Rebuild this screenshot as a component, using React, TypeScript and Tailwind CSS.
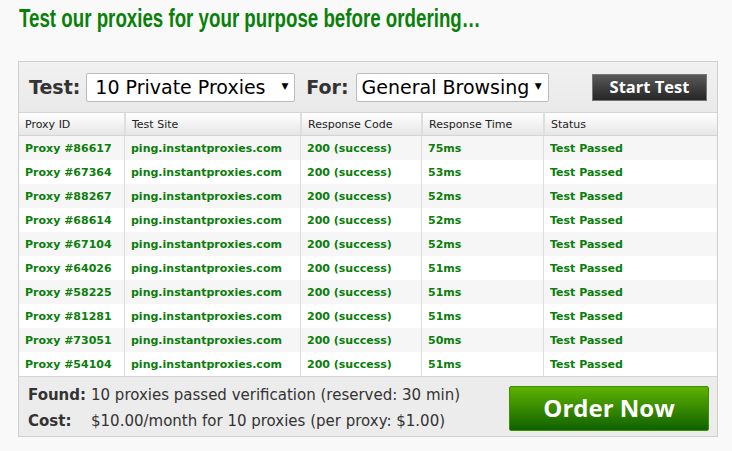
import React from "react";

const rows = [
  ["86617", "75ms"],
  ["67364", "53ms"],
  ["88267", "52ms"],
  ["68614", "52ms"],
  ["67104", "52ms"],
  ["64026", "51ms"],
  ["58225", "51ms"],
  ["81281", "51ms"],
  ["73051", "50ms"],
  ["54104", "51ms"],
];

const cols = "grid grid-cols-[105px_176px_121px_122px_1fr]";

export default function App() {
  return (
    <div className="w-[732px] h-[451px] bg-[#f9f9f9] overflow-hidden font-['DejaVu_Sans',Verdana,sans-serif]">
      <div className="h-[61px] pl-[19px] pt-[1px]">
        <h1 className="origin-left scale-x-[0.72] whitespace-nowrap text-[26px] leading-[34px] font-bold text-[#0a800a] font-['Liberation_Sans',Arial,sans-serif]">
          Test our proxies for your purpose before ordering…
        </h1>
      </div>
      <div className="ml-[18px] w-[700px] border border-[#cfcfcf] bg-[#eeeeee]">
        <div className="h-[50px] flex items-center pl-[10px] pr-[10px] bg-gradient-to-b from-[#f1f1f1] to-[#e9e9e9]">
          <span className="text-[19px] font-bold text-[#333] mr-[6px]">Test:</span>
          <div className="w-[209px] h-[29px] bg-white border border-[#bbb] rounded-[2px] flex items-center pl-[8px] pr-[6px] text-[19px] text-black">
            <span className="flex-1 whitespace-nowrap">10 Private Proxies</span>
            <span className="text-[9px]">▼</span>
          </div>
          <span className="text-[19px] font-bold text-[#333] ml-[11px] mr-[7px]">For:</span>
          <div className="w-[193px] h-[29px] bg-white border border-[#bbb] rounded-[2px] flex items-center pl-[5px] pr-[6px] text-[19px] text-black">
            <span className="flex-1 whitespace-nowrap">General Browsing</span>
            <span className="text-[9px]">▼</span>
          </div>
          <div className="ml-auto w-[115px] h-[27px] border border-[#777] bg-gradient-to-b from-[#5a5a5a] to-[#262626] flex items-center justify-center text-white font-bold text-[16.5px] font-['Open_Sans',sans-serif]">
            Start Test
          </div>
        </div>
        <div className={`${cols} h-[24px] border-t border-b border-[#d4d4d4] bg-gradient-to-b from-[#ffffff] to-[#e6e6e6] text-[11px] text-[#222]`}>
          {["Proxy ID", "Test Site", "Response Code", "Response Time", "Status"].map((h, i) => (
            <div key={h} className={`pl-[6px] pt-[3px] flex items-center ${i > 0 ? "border-l-2 border-[#dedede]" : ""}`}>{h}</div>
          ))}
        </div>
        {rows.map(([id, t], r) => (
          <div key={id} className={`${cols} h-[24px] text-[11px] font-bold text-[#0b7d0b] ${r % 2 === 0 ? "bg-[#f6f6f6]" : "bg-white"}`}>
            {[`Proxy #${id}`, "ping.instantproxies.com", "200 (success)", t, "Test Passed"].map((c, i) => (
              <div key={i} className={`pl-[6px] pt-[3px] flex items-center whitespace-nowrap ${i > 0 ? "border-l border-[#dcdcdc]" : ""}`}>{c}</div>
            ))}
          </div>
        ))}
        <div className="h-[60px] border-t border-[#d4d4d4] bg-[#ececec] flex items-center pl-[9px] pr-[8px] pt-[3px]">
          <div className="flex-1 text-[#333] text-[15px]">
            <div className="flex h-[26px] items-center">
              <span className="w-[63px] font-bold">Found:</span>
              <span>10 proxies passed verification (reserved: 30 min)</span>
            </div>
            <div className="flex h-[26px] items-center">
              <span className="w-[63px] font-bold">Cost:</span>
              <span>$10.00/month for 10 proxies (per proxy: $1.00)</span>
            </div>
          </div>
          <div className="w-[200px] h-[45px] rounded-[2px] border border-[#3d8f00] bg-gradient-to-b from-[#5db300] to-[#0b6200] flex items-center justify-center text-white font-bold text-[24px] font-['Open_Sans',sans-serif]">
            Order Now
          </div>
        </div>
      </div>
    </div>
  );
}
